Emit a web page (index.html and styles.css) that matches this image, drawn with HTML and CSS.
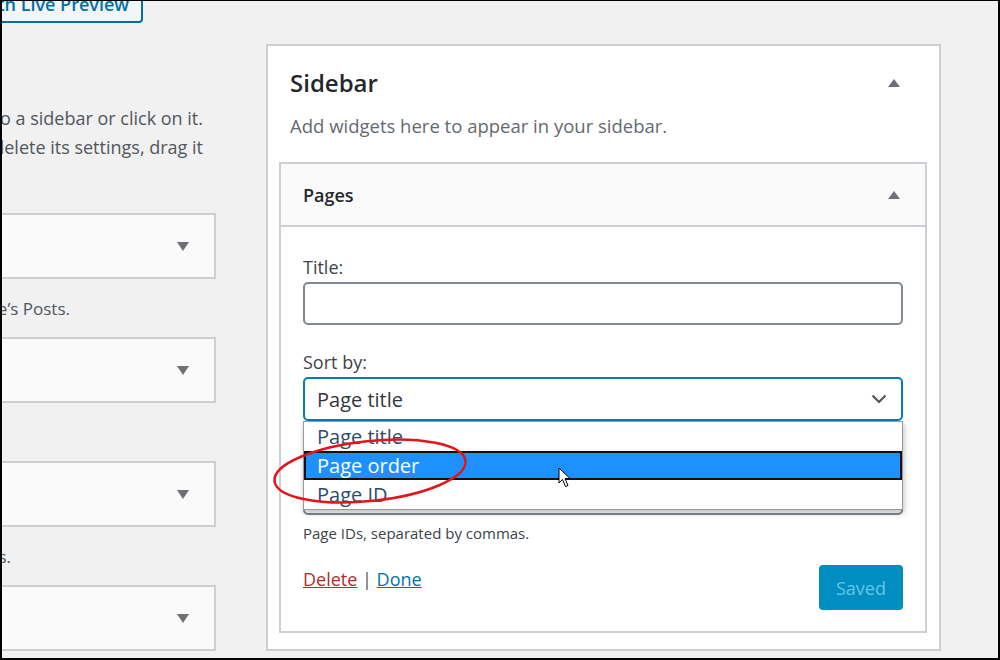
FILE: index.html
```html
<!DOCTYPE html>
<html lang="en">

<head>
    <meta charset="utf-8">
    <title>Widgets - Sidebar</title>

    <!-- Viewport -->
    <meta name="viewport" content="width=device-width, initial-scale=1.0">

    <link rel="stylesheet" href="styles.css">
</head>

<body>
    <div class="ecran">
        <div class="colonnes">

            <!-- Available widgets (left column, cut by the frame) -->
            <div class="widgets-dispo">
                <div class="barre-outils">
                    <a class="bouton-apercu" href="#">Manage with Live Preview</a>
                </div>

                <div class="intro">
                    <span>To activate a widget drag it to a sidebar or click on it.</span>
                    <span>To deactivate a widget and delete its settings, drag it</span>
                </div>

                <div class="widget-item">
                    <div class="widget-boite">
                        <svg class="fleche" viewBox="0 0 12 9"><polygon points="0,0 12,0 6,9"/></svg>
                    </div>
                    <p class="widget-desc fin-posts"><span>A monthly archive of your site’s Posts.</span></p>
                </div>
                <div class="widget-item">
                    <div class="widget-boite">
                        <svg class="fleche" viewBox="0 0 12 9"><polygon points="0,0 12,0 6,9"/></svg>
                    </div>
                    <p class="widget-desc fin-cache"><span>Displays an audio player.</span></p>
                </div>
                <div class="widget-item">
                    <div class="widget-boite">
                        <svg class="fleche" viewBox="0 0 12 9"><polygon points="0,0 12,0 6,9"/></svg>
                    </div>
                    <p class="widget-desc fin-cats"><span>A list or dropdown of categories.</span></p>
                </div>
                <div class="widget-item">
                    <div class="widget-boite">
                        <svg class="fleche" viewBox="0 0 12 9"><polygon points="0,0 12,0 6,9"/></svg>
                    </div>
                </div>
            </div>

            <!-- Sidebar area -->
            <div class="sidebar-panel">
                <div class="panel-entete">
                    <h2>Sidebar</h2>
                    <svg class="fleche-haut" viewBox="0 0 12 8"><polygon points="0,8 12,8 6,0"/></svg>
                </div>
                <p class="panel-desc">Add widgets here to appear in your sidebar.</p>

                <div class="widget-ouvert">
                    <div class="widget-titre">
                        <h3>Pages</h3>
                        <svg class="fleche-haut" viewBox="0 0 12 8"><polygon points="0,8 12,8 6,0"/></svg>
                    </div>

                    <div class="widget-contenu">
                        <label class="champ-label">Title:</label>
                        <div class="champ-texte"></div>

                        <label class="champ-label">Sort by:</label>
                        <div class="champ-select">
                            <div class="select-valeur">
                                <span>Page title</span>
                                <svg class="chevron" viewBox="0 0 16 10"><polyline points="1.5,1.5 8,8 14.5,1.5"/></svg>
                            </div>
                            <ul class="liste-deroulante">
                                <li>Page title</li>
                                <li class="actif">Page order</li>
                                <li>Page ID</li>
                            </ul>
                        </div>

                        <label class="champ-label">Exclude:</label>
                        <div class="champ-texte"></div>
                        <p class="aide">Page IDs, separated by commas.</p>

                        <div class="actions">
                            <div class="liens">
                                <a class="lien-supprimer" href="#">Delete</a>
                                <span class="separateur">|</span>
                                <a class="lien-termine" href="#">Done</a>
                            </div>
                            <button class="bouton-enregistre" disabled>Saved</button>
                        </div>
                    </div>
                </div>
            </div>
        </div>

        <!-- Red circle drawn over the screenshot -->
        <svg class="annotation" viewBox="0 0 1000 660">
            <ellipse cx="370" cy="471" rx="96" ry="30" transform="rotate(-6 370 471)"/>
        </svg>

        <!-- Mouse pointer -->
        <svg class="curseur" viewBox="0 0 13 21">
            <path d="M1 1 L1 16 L4.5 12.5 L7.5 19.5 L10 18.5 L7 11.5 L12 11.5 Z"/>
        </svg>
    </div>
</body>

</html>
```

FILE: styles.css
```css
/* Reset
============================================================*/

* {
    margin: 0;
    padding: 0;
    box-sizing: border-box;
}

body {
    font-family: "Open Sans", "Noto Sans", Arial, sans-serif;
    color: #23282d;
    background-color: #ffffff;
}

/* Frame of the screenshot
============================================================*/

.ecran {
    width: 1000px;
    height: 660px;
    border: 2px solid #000;
    border-top-width: 1px;
    background-color: #f1f1f1;
    overflow: hidden;
    position: relative;
}

.colonnes {
    display: flex;
    align-items: flex-start;
}

/* Left column: available widgets
============================================================*/

.widgets-dispo {
    width: 214px;
    flex-shrink: 0;
}

.barre-outils {
    width: 141px;
    display: flex;
    justify-content: flex-end;
}

.bouton-apercu {
    flex-shrink: 0;
    white-space: nowrap;
    margin-top: -8px;
    padding: 0 12px 8px 14px;
    font-size: 18px;
    line-height: 18px;
    font-weight: 600;
    color: #0071a1;
    text-decoration: none;
    background-color: #f3f5f6;
    border: 2px solid #0071a1;
    border-radius: 4px;
}

.intro {
    margin-top: 81px;
    padding-right: 13px;
    display: flex;
    flex-direction: column;
    align-items: flex-end;
    font-size: 18px;
    line-height: 29px;
    color: #50575e;
}

.intro span {
    white-space: nowrap;
}

.intro + .widget-item {
    margin-top: 51px;
}

.widget-boite {
    height: 66px;
    margin-left: -30px;
    padding-right: 25px;
    border: 2px solid #ccd0d4;
    background-color: #fafafa;
    display: flex;
    justify-content: flex-end;
    align-items: center;
}

.fleche {
    width: 12px;
    height: 9px;
    fill: #6d7176;
}

.widget-desc {
    height: 58px;
    display: flex;
    justify-content: flex-end;
    align-items: center;
    font-size: 17px;
    color: #50575e;
}

.widget-desc span {
    white-space: nowrap;
}

/*Where each description ends behind the frame edge*/
.fin-posts {
    padding-right: 146px;
}

.fin-cache {
    padding-right: 240px;
}

.fin-cats {
    padding-right: 205px;
}

/* Sidebar panel
============================================================*/

.sidebar-panel {
    width: 675px;
    margin-top: 43px;
    margin-left: 50px;
    flex-shrink: 0;
    background-color: #fff;
    border: 2px solid #ccd0d4;
    padding-bottom: 16px;
}

.panel-entete {
    margin-top: 22px;
    padding: 0 39px 0 22px;
    display: flex;
    justify-content: space-between;
    align-items: center;
}

h2 {
    font-size: 24px;
    line-height: 30px;
    font-weight: 600;
    color: #23282d;
}

.fleche-haut {
    width: 12px;
    height: 8px;
    fill: #6d7176;
}

.panel-desc {
    margin-top: 15px;
    padding-left: 22px;
    font-size: 18.5px;
    line-height: 26px;
    color: #646970;
}

/* Open widget: Pages
============================================================*/

.widget-ouvert {
    margin: 23px 12px 0 11px;
    border: 2px solid #ccd0d4;
}

.widget-titre {
    height: 63px;
    padding: 0 25px 0 22px;
    background-color: #fafafa;
    border-bottom: 2px solid #ccd0d4;
    display: flex;
    justify-content: space-between;
    align-items: center;
}

h3 {
    font-size: 18px;
    font-weight: 600;
    color: #23282d;
}

.widget-contenu {
    padding: 27px 22px 21px 22px;
    display: flex;
    flex-direction: column;
}

.champ-label {
    font-size: 18px;
    line-height: 26px;
    color: #3c434a;
    margin-bottom: 2px;
}

.champ-texte {
    height: 43px;
    border: 2px solid #7e8993;
    border-radius: 5px;
    background-color: #fff;
    margin-bottom: 24px;
}

.champ-select {
    position: relative;
    margin-bottom: 23px;
}

.select-valeur {
    height: 44px;
    padding: 0 14px 0 12px;
    border: 2px solid #007cba;
    border-radius: 5px;
    display: flex;
    justify-content: space-between;
    align-items: center;
    font-size: 20px;
    color: #32373c;
}

.chevron {
    width: 16px;
    height: 10px;
    fill: none;
    stroke: #50575e;
    stroke-width: 2.2;
}

/*Native list opened over the next field*/
.liste-deroulante {
    position: absolute;
    top: 100%;
    left: 0;
    right: 0;
    list-style: none;
    background-color: #fff;
    border: 1px solid #9a9a9a;
    box-shadow: 1px 3px 6px rgba(0, 0, 0, 0.25);
    z-index: 2;
}

.liste-deroulante li {
    height: 29px;
    padding-left: 11px;
    font-size: 20px;
    line-height: 26px;
    color: #2c4d6b;
    border: 2px solid transparent;
}

.liste-deroulante li.actif {
    color: #fff;
    background-color: #1e90ff;
    border-color: #111;
}

.champ-texte + .aide {
    margin-top: -17px;
}

.aide {
    font-size: 15px;
    line-height: 22px;
    color: #3c434a;
}

.actions {
    margin-top: 21px;
    display: flex;
    justify-content: space-between;
    align-items: flex-start;
}

.liens {
    font-size: 18px;
    line-height: 28px;
}

.lien-supprimer {
    color: #b32d2e;
}

.separateur {
    color: #50575e;
}

.lien-termine {
    color: #0073aa;
}

.bouton-enregistre {
    width: 84px;
    height: 45px;
    font-family: inherit;
    font-size: 18px;
    color: #66c6e4;
    background-color: #008ec2;
    border: none;
    border-radius: 4px;
}

/* Things drawn over the picture
============================================================*/

.annotation {
    position: absolute;
    left: -2px;
    top: -1px;
    width: 1000px;
    height: 660px;
    pointer-events: none;
    z-index: 5;
}

.annotation ellipse {
    fill: none;
    stroke: #e3141b;
    stroke-width: 2.5;
}

.curseur {
    position: absolute;
    left: 556px;
    top: 466px;
    width: 13px;
    height: 21px;
    z-index: 6;
}

.curseur path {
    fill: #fff;
    stroke: #000;
    stroke-width: 1;
    stroke-linejoin: round;
}
```
